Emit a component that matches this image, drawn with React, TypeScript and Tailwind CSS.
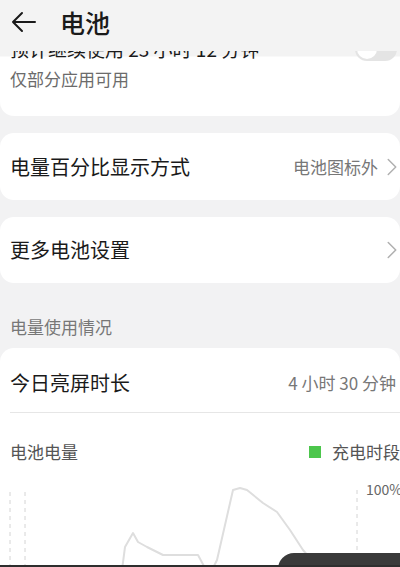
import { ChevronRight } from 'lucide-react';

const font = { fontFamily: '"Noto Sans CJK SC", "Noto Sans", sans-serif' };

function Chevron() {
  return <ChevronRight className="w-[30px] h-[30px] text-[#b0b0b0] -ml-[1px] -mr-[17px]" strokeWidth={1.2} />;
}

function BatteryChart() {
  return (
    <div className="relative h-[103px]">
      <svg width="400" height="103" viewBox="0 0 400 103" className="block">
        <line x1="10" y1="28" x2="10" y2="103" stroke="#d4d4d4" strokeWidth="1" strokeDasharray="4 4" />
        <line x1="25" y1="28" x2="25" y2="103" stroke="#d4d4d4" strokeWidth="1" strokeDasharray="4 4" />
        <line x1="357" y1="26" x2="357" y2="103" stroke="#d4d4d4" strokeWidth="1" strokeDasharray="4 4" />
        <path
          d="M122 106 L125 83 L133 69 L138 78 L147 83 L163 91 L198 91 L205 104 L209 112 L213 104 L217 96 L233 26 L240 24 L247 26 L263 39 L277 48 L290 66 L303 86 L320 106"
          fill="none"
          stroke="#dedede"
          strokeWidth="2"
          strokeLinejoin="round"
          strokeLinecap="round"
        />
      </svg>
      <span className="absolute left-[366px] top-[15px] text-[14px] leading-[20px] text-[#666]">100%</span>
      <div className="absolute left-[278px] top-[89px] w-[140px] h-[40px] rounded-t-[16px] bg-[#3a3a3a] pl-[24px] pt-[9px] text-[14px] leading-[18px] text-white">
        00:00 – 00:00
      </div>
    </div>
  );
}

export default function App() {
  return (
    <div className="relative h-[567px] w-[400px] overflow-hidden bg-[#f2f2f3] flex flex-col" style={font}>
      <header className="relative z-10 h-[51px] shrink-0 bg-[#f3f3f3] flex items-start pt-[8px] pl-[11px]">
        <svg width="26" height="28" viewBox="0 0 26 28">
          <path d="M24 14 H2 M11 5 L2 14 L11 23" fill="none" stroke="#1a1a1a" strokeWidth="2" strokeLinecap="round" strokeLinejoin="round" />
        </svg>
        <h1 className="ml-[23px] text-[25px] leading-[28px] font-medium text-[#1a1a1a]">电池</h1>
      </header>

      <section className="-mt-[14px] shrink-0 bg-[linear-gradient(to_bottom,#f3f3f3_0,#f3f3f3_19px,#ffffff_20px)] rounded-b-[14px] px-[10px] pb-[26px]">
        <div className="flex items-center justify-between h-[24px]">
          <span className="text-[19px] leading-[24px] text-[#1a1a1a]">预计继续使用 23 小时 12 分钟</span>
          <div className="w-[42px] h-[24px] rounded-full bg-[#e4e4e4] -mr-[7px] flex items-center pl-[2px]">
            <div className="w-[20px] h-[20px] rounded-full bg-white"></div>
          </div>
        </div>
        <p className="mt-[7px] text-[17px] leading-[22px] text-[#6b6b6b]">仅部分应用可用</p>
      </section>

      <div className="mt-[17px] shrink-0 h-[67px] bg-white rounded-[14px] px-[10px] flex items-center justify-between">
        <span className="text-[20px] leading-[24px] text-[#1a1a1a]">电量百分比显示方式</span>
        <div className="flex items-center">
          <span className="text-[17px] leading-[22px] text-[#777]">电池图标外</span>
          <Chevron />
        </div>
      </div>

      <div className="mt-[17px] shrink-0 h-[66px] bg-white rounded-[14px] px-[10px] flex items-center justify-between">
        <span className="text-[20px] leading-[24px] text-[#1a1a1a]">更多电池设置</span>
        <Chevron />
      </div>

      <div className="shrink-0 h-[65px] px-[10px] pt-[32px]">
        <span className="text-[17px] leading-[22px] text-[#777]">电量使用情况</span>
      </div>

      <section className="shrink-0 bg-white rounded-t-[14px]">
        <div className="h-[64px] px-[10px] pt-[23px] flex justify-between whitespace-nowrap">
          <span className="text-[20px] leading-[24px] text-[#1a1a1a]">今日亮屏时长</span>
          <span className="text-[17px] leading-[24px] text-[#777] -mr-[6px]">4 小时 30 分钟</span>
        </div>
        <div className="ml-[10px] h-px bg-[#e6e6e6]"></div>
        <div className="px-[10px] pt-[27px] flex items-center justify-between h-[51px] whitespace-nowrap">
          <span className="text-[17px] leading-[24px] text-[#555]">电池电量</span>
          <div className="flex items-center -mr-[10px]">
            <div className="w-[12px] h-[12px] bg-[#4cc64c]"></div>
            <span className="ml-[11px] text-[17px] leading-[24px] text-[#555]">充电时段</span>
          </div>
        </div>
        <BatteryChart />
      </section>

      <div className="absolute left-0 bottom-0 w-full h-[2px] bg-[#2e2e2e]"></div>
    </div>
  );
}
